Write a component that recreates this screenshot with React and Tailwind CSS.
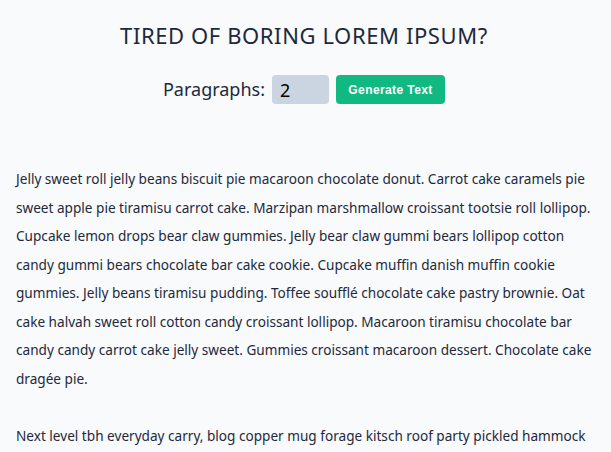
import React, { useState } from "react";

const PARAGRAPHS = [
  "Jelly sweet roll jelly beans biscuit pie macaroon chocolate donut. Carrot cake caramels pie sweet apple pie tiramisu carrot cake. Marzipan marshmallow croissant tootsie roll lollipop. Cupcake lemon drops bear claw gummies. Jelly bear claw gummi bears lollipop cotton candy gummi bears chocolate bar cake cookie. Cupcake muffin danish muffin cookie gummies. Jelly beans tiramisu pudding. Toffee soufflé chocolate cake pastry brownie. Oat cake halvah sweet roll cotton candy croissant lollipop. Macaroon tiramisu chocolate bar candy candy carrot cake jelly sweet. Gummies croissant macaroon dessert. Chocolate cake dragée pie.",
  "Next level tbh everyday carry, blog copper mug forage kitsch roof party pickled hammock kale chips tofu. Etsy chambray cred four loko, small batch YOLO shabby chic.",
];

export default function App() {
  const [count, setCount] = useState(2);

  return (
    <div className="h-screen overflow-hidden bg-[#f8fafc] text-[#1e293b] font-['Noto_Sans',sans-serif]">
      <section className="px-4 pt-[19px]">
        <h3 className="text-center text-[22px] tracking-[0.6px] uppercase pr-[3px]">
          Tired of boring lorem ipsum?
        </h3>
        <form
          className="flex items-center justify-center mt-[23px] pr-[3px]"
          onSubmit={(e) => e.preventDefault()}
        >
          <label htmlFor="amount" className="text-[18px] mr-[7px]">
            Paragraphs:
          </label>
          <input
            id="amount"
            type="number"
            value={count}
            onChange={(e) => setCount(e.target.value)}
            className="w-[57px] h-[29px] bg-[#cbd5e1] rounded-[4px] px-2 text-[18px] text-black outline-none"
          />
          <button
            type="submit"
            className="ml-[7px] w-[109px] h-[29px] bg-[#10b981] text-white text-[12px] font-semibold tracking-[0.4px] rounded-[4px] font-['Liberation_Sans',sans-serif]"
          >
            Generate Text
          </button>
        </form>
        <article className="mt-[61px]">
          {PARAGRAPHS.map((p, i) => (
            <p key={i} className="text-[13.6px] leading-[28.5px] mb-[28.5px]">
              {p}
            </p>
          ))}
        </article>
      </section>
    </div>
  );
}
